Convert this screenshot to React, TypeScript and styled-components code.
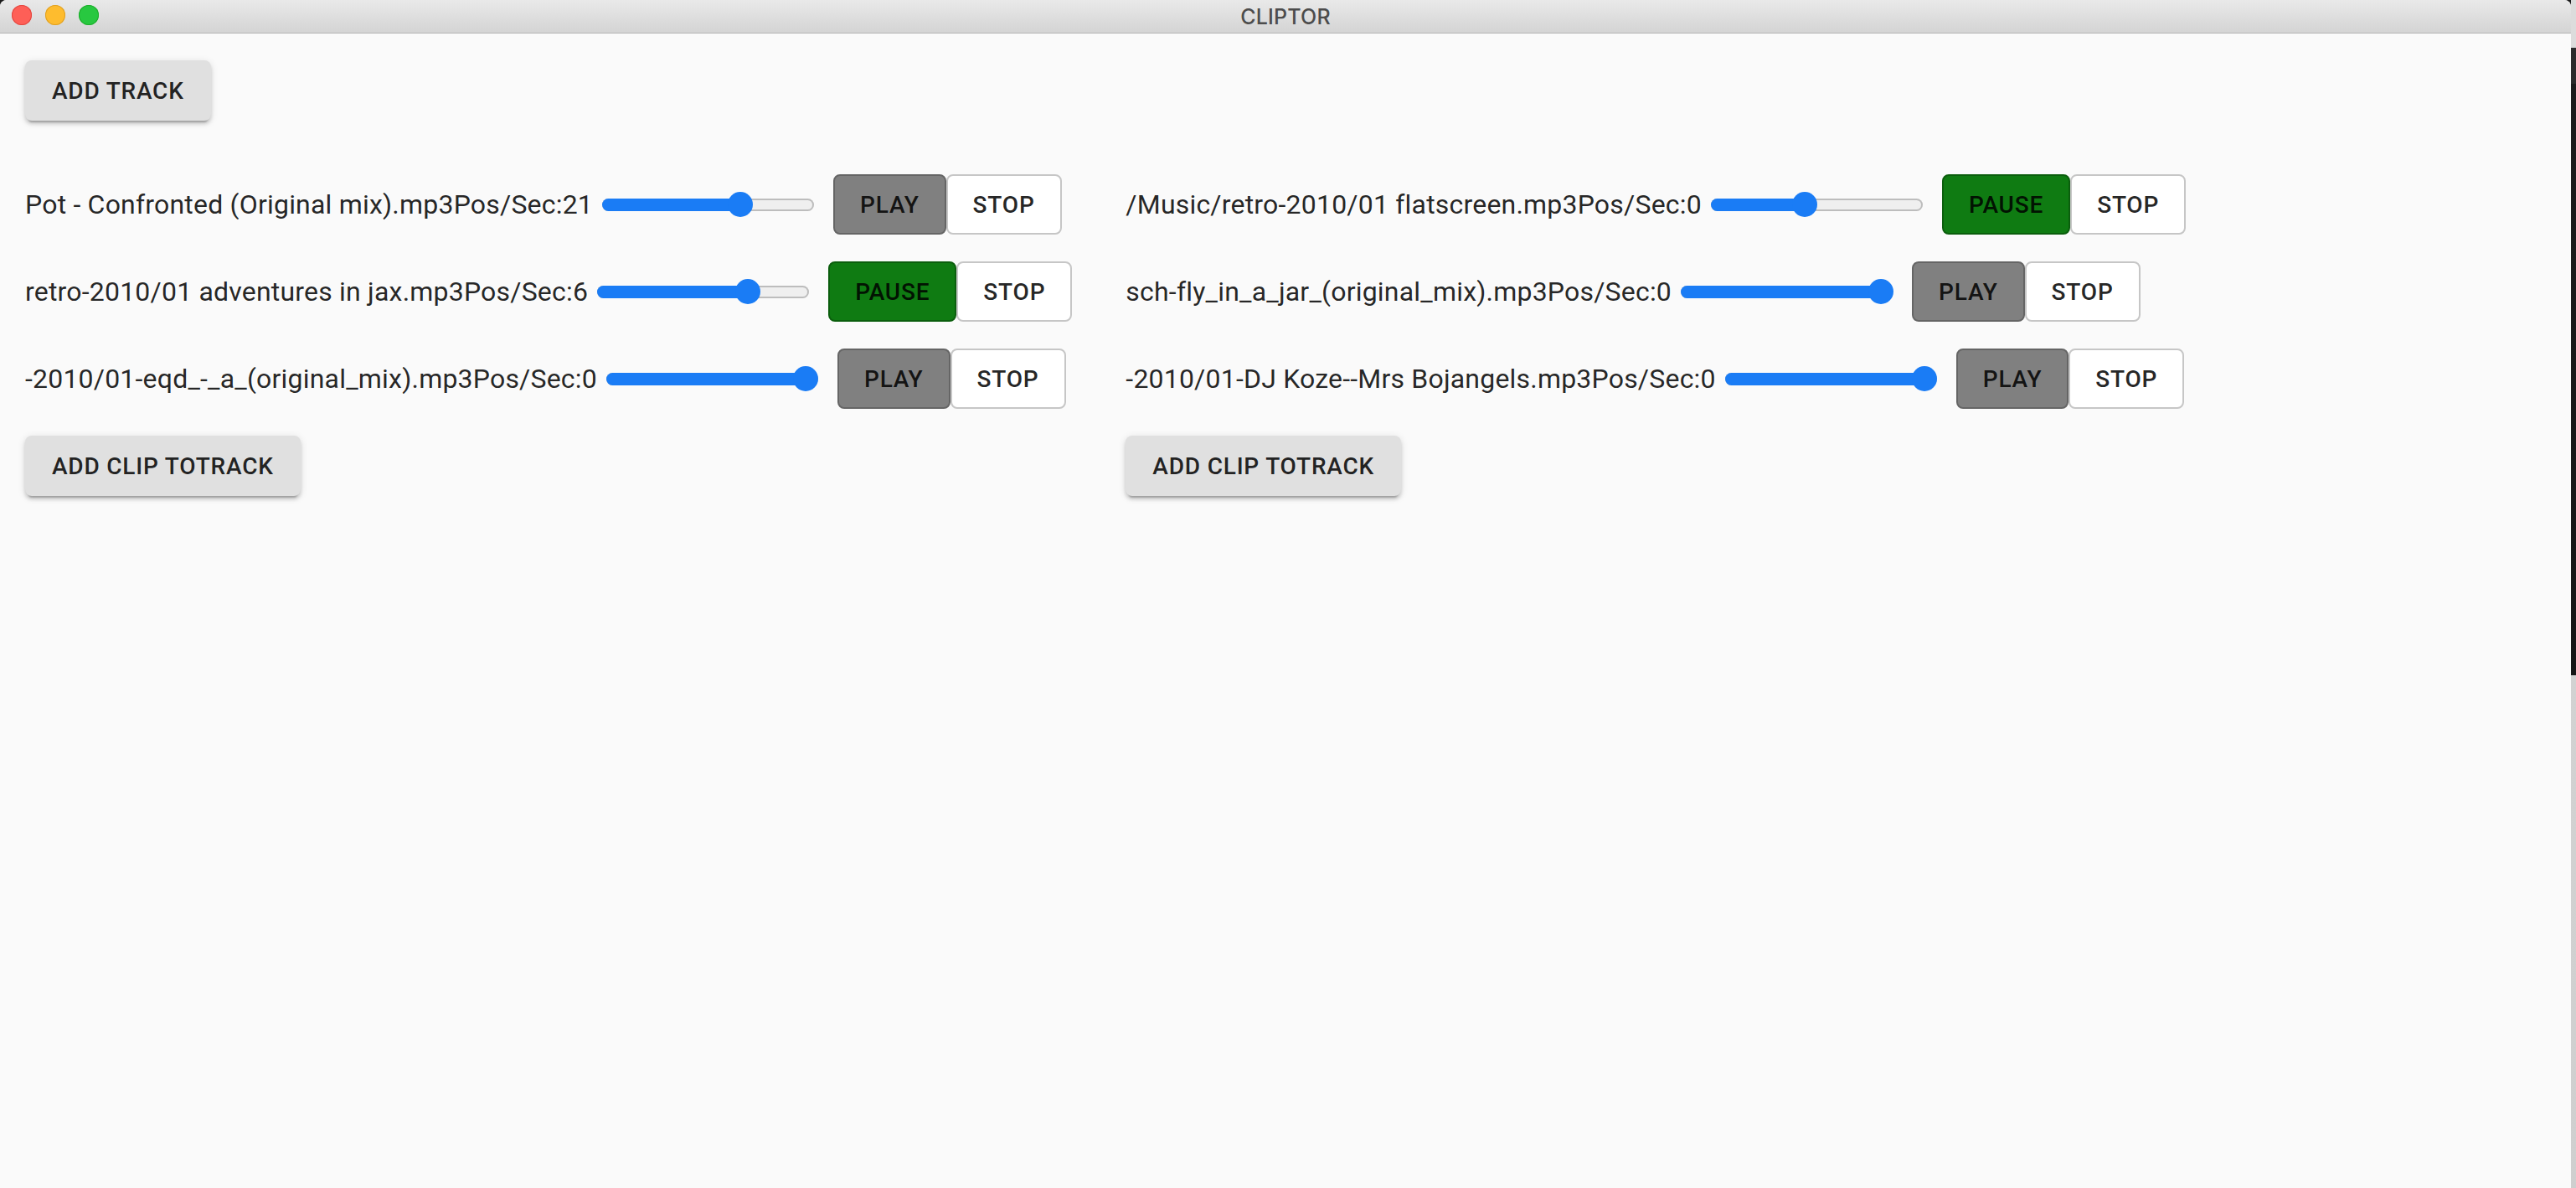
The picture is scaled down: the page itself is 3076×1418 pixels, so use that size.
import React from "react";
import styled, { createGlobalStyle } from "styled-components";

const GlobalStyle = createGlobalStyle`
  html, body {
    margin: 0;
    padding: 0;
    width: 3076px;
    height: 1418px;
    overflow: hidden;
    background: #1a1a1a;
  }
  * { box-sizing: border-box; }
`;

const Screen = styled.div`
  display: flex;
  width: 3076px;
  height: 1418px;
`;

const Window = styled.div`
  flex: 0 0 3070px;
  display: flex;
  flex-direction: column;
  background: #fafafa;
  border-top-right-radius: 8px;
  border-top-left-radius: 8px;
  overflow: hidden;
`;

const Desktop = styled.div`
  flex: 1;
  background: linear-gradient(
    to bottom,
    #dcdcdc 0px,
    #dcdcdc 57px,
    #2c2c2c 57px,
    #2c2c2c 100px,
    #1c1c1c 100px,
    #161616 806px,
    #d2d2d2 806px,
    #cfcfcf 1418px
  );
`;

const TitleBar = styled.div`
  position: relative;
  flex: 0 0 40px;
  height: 40px;
  display: flex;
  align-items: center;
  justify-content: center;
  background: linear-gradient(to bottom, #e9e9e9, #d4d4d4);
  border-bottom: 1px solid #b4b4b4;
`;

const Lights = styled.div`
  position: absolute;
  left: 14px;
  top: 6px;
  display: flex;
  gap: 16px;
`;

const Light = styled.span<{ $fill: string; $edge: string }>`
  width: 24px;
  height: 24px;
  border-radius: 50%;
  background: ${(p) => p.$fill};
  box-shadow: inset 0 0 0 1px ${(p) => p.$edge};
`;

const Title = styled.div`
  font-family: Inter, "Liberation Sans", sans-serif;
  font-size: 25px;
  font-weight: 500;
  color: #4c4c4c;
  letter-spacing: 0.2px;
`;

const Content = styled.div`
  flex: 1;
  padding: 32px 30px;
  display: flex;
  flex-direction: column;
  align-items: flex-start;
  gap: 64px;
  font-family: Roboto, "Liberation Sans", sans-serif;
`;

const RaisedButton = styled.button`
  height: 72px;
  padding: 0 32px;
  border: none;
  border-radius: 8px;
  background: #e0e0e0;
  color: rgba(0, 0, 0, 0.87);
  font-family: Roboto, "Liberation Sans", sans-serif;
  font-size: 28px;
  font-weight: 500;
  letter-spacing: 0.8px;
  text-transform: uppercase;
  box-shadow: 0px 6px 2px -4px rgba(0, 0, 0, 0.2),
    0px 4px 4px 0px rgba(0, 0, 0, 0.14), 0px 2px 10px 0px rgba(0, 0, 0, 0.12);
  cursor: pointer;
`;

const Columns = styled.div`
  display: flex;
  align-items: flex-start;
  gap: 64px;
`;

const Column = styled.div`
  display: flex;
  flex-direction: column;
  align-items: flex-start;
  gap: 32px;
`;

const Row = styled.div`
  display: flex;
  align-items: center;
  height: 72px;
`;

const TrackLabel = styled.span`
  font-size: 32px;
  font-weight: 400;
  letter-spacing: 0.2px;
  color: rgba(0, 0, 0, 0.87);
  white-space: nowrap;
`;

const SliderTrack = styled.div`
  position: relative;
  width: 253px;
  height: 15px;
  margin: 0 23px 0 11px;
  border-radius: 8px;
  background: #efefef;
  box-shadow: inset 0 0 0 2px #bdbdbd;
`;

const SliderFill = styled.div`
  position: absolute;
  left: 0;
  top: 0;
  bottom: 0;
  border-radius: 8px;
  background: #1a7cf5;
`;

const SliderThumb = styled.div`
  position: absolute;
  top: 50%;
  width: 30px;
  height: 30px;
  border-radius: 50%;
  background: #1a7cf5;
  transform: translate(-50%, -50%);
`;

const ButtonGroup = styled.div`
  display: flex;
`;

type Variant = "play" | "pause" | "stop";

const variantBg: Record<Variant, string> = {
  play: "#808080",
  pause: "#0f7b12",
  stop: "#ffffff",
};

const variantBorder: Record<Variant, string> = {
  play: "#656565",
  pause: "#0b5e0d",
  stop: "#c6c6c6",
};

const ControlButton = styled.button<{ $variant: Variant }>`
  height: 72px;
  padding: 0 30px;
  border: 2px solid ${(p) => variantBorder[p.$variant]};
  border-radius: 8px;
  background: ${(p) => variantBg[p.$variant]};
  color: rgba(0, 0, 0, 0.87);
  font-family: Roboto, "Liberation Sans", sans-serif;
  font-size: 28px;
  font-weight: 500;
  letter-spacing: 0.8px;
  text-transform: uppercase;
  cursor: pointer;
`;

type Track = { name: string; pos: number; progress: number; playing: boolean };

const leftTracks: Track[] = [
  { name: "Pot - Confronted (Original mix).mp3", pos: 21, progress: 0.67, playing: false },
  { name: "retro-2010/01 adventures in jax.mp3", pos: 6, progress: 0.74, playing: true },
  { name: "-2010/01-eqd_-_a_(original_mix).mp3", pos: 0, progress: 1, playing: false },
];

const rightTracks: Track[] = [
  { name: "/Music/retro-2010/01 flatscreen.mp3", pos: 0, progress: 0.435, playing: true },
  { name: "sch-fly_in_a_jar_(original_mix).mp3", pos: 0, progress: 1, playing: false },
  { name: "-2010/01-DJ Koze--Mrs Bojangels.mp3", pos: 0, progress: 1, playing: false },
];

const SLIDER_W = 253;
const THUMB = 29;

function Slider({ progress }: { progress: number }) {
  const center = THUMB / 2 + progress * (SLIDER_W - THUMB);
  return (
    <SliderTrack>
      <SliderFill style={{ width: center }} />
      <SliderThumb style={{ left: center }} />
    </SliderTrack>
  );
}

function TrackRow({ track }: { track: Track }) {
  return (
    <Row>
      <TrackLabel>
        {track.name}Pos/Sec:{track.pos}
      </TrackLabel>
      <Slider progress={track.progress} />
      <ButtonGroup>
        <ControlButton $variant={track.playing ? "pause" : "play"}>
          {track.playing ? "Pause" : "Play"}
        </ControlButton>
        <ControlButton $variant="stop">Stop</ControlButton>
      </ButtonGroup>
    </Row>
  );
}

function TrackColumn({ tracks }: { tracks: Track[] }) {
  return (
    <Column>
      {tracks.map((t) => (
        <TrackRow key={t.name} track={t} />
      ))}
      <RaisedButton>Add clip toTrack</RaisedButton>
    </Column>
  );
}

export default function App() {
  return (
    <>
      <GlobalStyle />
      <Screen>
        <Window>
          <TitleBar>
            <Lights>
              <Light $fill="#fe5f57" $edge="#e2463f" />
              <Light $fill="#febc2e" $edge="#dfa023" />
              <Light $fill="#28c840" $edge="#1dad2b" />
            </Lights>
            <Title>CLIPTOR</Title>
          </TitleBar>
          <Content>
            <RaisedButton>Add Track</RaisedButton>
            <Columns>
              <TrackColumn tracks={leftTracks} />
              <TrackColumn tracks={rightTracks} />
            </Columns>
          </Content>
        </Window>
        <Desktop />
      </Screen>
    </>
  );
}
